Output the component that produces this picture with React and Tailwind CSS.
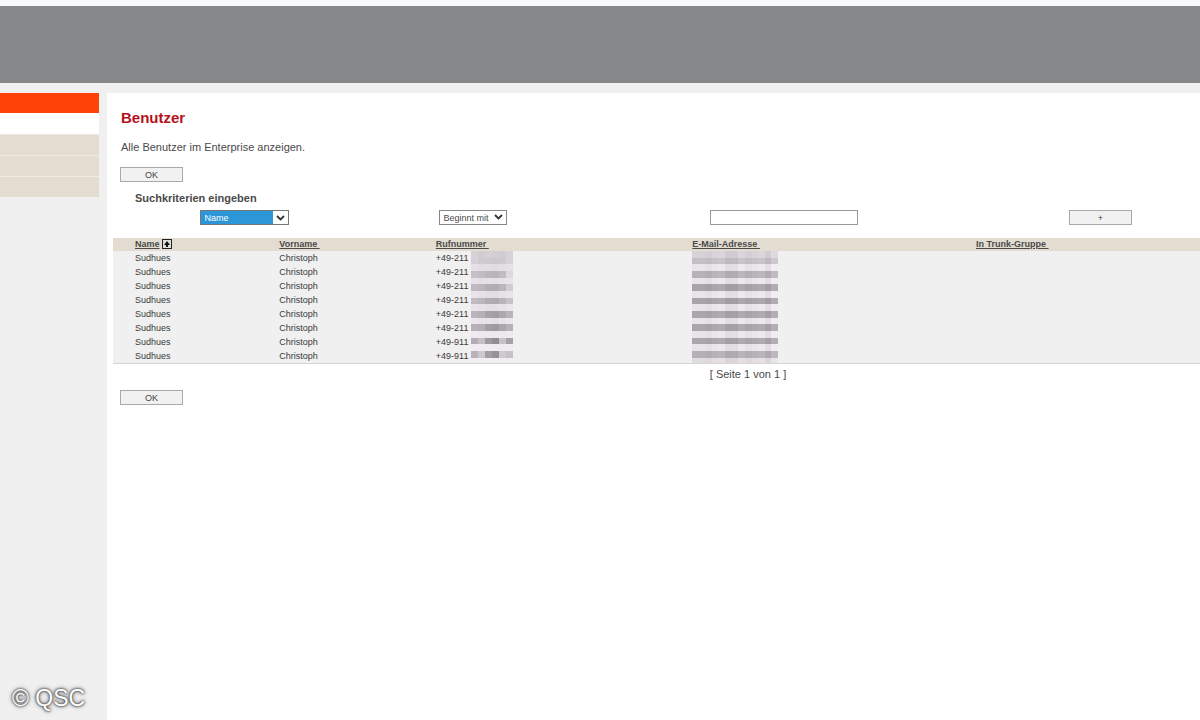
import { useState } from "react";

const users = [
  { name: "Sudhues", firstName: "Christoph", phone: "+49-211" },
  { name: "Sudhues", firstName: "Christoph", phone: "+49-211" },
  { name: "Sudhues", firstName: "Christoph", phone: "+49-211" },
  { name: "Sudhues", firstName: "Christoph", phone: "+49-211" },
  { name: "Sudhues", firstName: "Christoph", phone: "+49-211" },
  { name: "Sudhues", firstName: "Christoph", phone: "+49-211" },
  { name: "Sudhues", firstName: "Christoph", phone: "+49-911" },
  { name: "Sudhues", firstName: "Christoph", phone: "+49-911" },
];

const menuItems = ["a", "b", "c"];

// Grey levels of the mosaic tiles, one line per half row of the table
const PHONE_TILES = [
  [214, 208, 212, 210, 208, 214],
  [212, 206, 205, 204, 206, 214],
  [228, 224, 226, 224, 226, 228],
  [196, 192, 186, 184, 192, 220],
  [230, 228, 228, 228, 230, 232],
  [190, 186, 178, 176, 186, 208],
  [232, 228, 226, 226, 230, 232],
  [192, 186, 176, 174, 184, 198],
  [232, 230, 228, 228, 230, 234],
  [186, 180, 166, 162, 172, 184],
  [234, 230, 230, 228, 232, 234],
  [182, 178, 162, 158, 170, 182],
  [238, 236, 236, 236, 236, 238],
  [178, 196, 158, 144, 198, 164],
  [239, 239, 239, 239, 239, 239],
  [182, 204, 162, 150, 206, 198],
];

const MAIL_COLUMNS = [-2, -2, -6, 0, 2, -9, -8, 2, -5, 0, 2, -8, 6];
const MAIL_BARS = [198, 184, 170, 170, 172, 172, 172, 182];
const MAIL_TILES = Array.from({ length: 17 }, (_, i) => {
  const base = i === 0 ? 216 : i === 16 ? 226 : i % 2 ? MAIL_BARS[(i - 1) / 2] : 234;
  return MAIL_COLUMNS.map((d) => base + d);
});

// Every table row shows its own 14px slice of the mosaic
function Mosaic({ tiles, row, width, className }) {
  const cell = width / tiles[0].length;
  return (
    <svg
      className={className}
      width={width}
      height="14"
      viewBox={`0 ${row * 14} ${width} 14`}
      shapeRendering="crispEdges"
      aria-hidden="true"
    >
      {tiles.map((line, y) =>
        line.map((v, x) => (
          <rect
            key={`${x}-${y}`}
            x={x * cell}
            y={y * 6.67}
            width={cell + 0.5}
            height="7"
            fill={`rgb(${v}, ${v - 4}, ${v + 1})`}
          />
        ))
      )}
    </svg>
  );
}

function Chevron({ className }) {
  return (
    <svg className={className} width="9" height="6" viewBox="0 0 9 6" aria-hidden="true">
      <path d="M1 1 L4.5 4.5 L8 1" fill="none" stroke="#333" strokeWidth="1.8" />
    </svg>
  );
}

function SmallButton({ children, ...props }) {
  return (
    <button
      type="button"
      className="block h-[15px] w-[63px] border border-[#a9a9a9] bg-[#f1f1f1] text-center text-[9px] leading-3 text-[#444]"
      {...props}
    >
      {children}
    </button>
  );
}

function ColumnHead({ label, className, children }) {
  return (
    <th scope="col" className={`p-0 text-left font-bold ${className}`}>
      <a href="#" className="whitespace-pre underline">
        {label}
      </a>
      {children}
    </th>
  );
}

export default function App() {
  const [field, setField] = useState("Name");
  const [mode, setMode] = useState("Beginnt mit");
  const [query, setQuery] = useState("");

  return (
    <div className="flex min-h-screen flex-col bg-[#f0f0f0] font-['Liberation_Sans',Arial,sans-serif] text-[#4a4a4a]">
      <header className="h-[83px] border-t-6 border-[#f5f9f9] bg-[#868889]" />

      <div className="flex flex-1 pt-2.5">
        <aside className="flex w-[107px] shrink-0 flex-col justify-between">
          <nav className="w-[99px]">
            <div className="h-5 bg-[#ff4308]" />
            <div className="h-[21px] bg-white" />
            {menuItems.map((item) => (
              <div key={item} className="h-[21px] border-t border-[#eeebe3] bg-[#e3ddd1]" />
            ))}
          </nav>
          <p className="pb-2 pl-3 text-[23px] leading-7 text-white [text-shadow:0_0_2px_#333,0_0_3px_#555,0_0_5px_#777]">
            © QSC
          </p>
        </aside>

        <main className="min-w-0 flex-1 bg-white pt-4">
          <div className="px-3.5">
            <h1 className="text-[15px] leading-[18px] font-bold text-[#b5121b]">Benutzer</h1>
            <p className="mt-3 text-[11px] leading-4">Alle Benutzer im Enterprise anzeigen.</p>
          </div>
          <div className="mt-3 px-[13px]">
            <SmallButton>OK</SmallButton>
          </div>

          <form onSubmit={(e) => e.preventDefault()}>
            <h2 className="mt-2 pl-7 text-[11px] leading-4 font-bold">Suchkriterien eingeben</h2>
            <div className="mt-1 grid h-4 grid-cols-[270fr_187fr_435fr_199fr] items-start justify-items-center pl-0.5">
              <div className="relative">
                <select
                  aria-label="Suchfeld"
                  value={field}
                  onChange={(e) => setField(e.target.value)}
                  className="block h-[15px] w-[89px] appearance-none border border-[#777] bg-[#2c97d8] pl-1 text-[9px] leading-3 text-white"
                >
                  <option>Name</option>
                  <option>Vorname</option>
                  <option>Rufnummer</option>
                </select>
                <span className="pointer-events-none absolute inset-y-px right-px flex w-[15px] items-center justify-center bg-white">
                  <Chevron />
                </span>
              </div>
              <div className="relative">
                <select
                  aria-label="Vergleich"
                  value={mode}
                  onChange={(e) => setMode(e.target.value)}
                  className="block h-[15px] w-[68px] appearance-none border border-[#888] bg-white pl-1 text-[9px] leading-3"
                >
                  <option>Beginnt mit</option>
                  <option>Enthält</option>
                </select>
                <Chevron className="pointer-events-none absolute top-1 right-1" />
              </div>
              <input
                type="text"
                aria-label="Suchbegriff"
                value={query}
                onChange={(e) => setQuery(e.target.value)}
                className="block h-[15px] w-[148px] border border-[#999] bg-white px-1 text-[9px]"
              />
              <SmallButton aria-label="Kriterium hinzufügen">+</SmallButton>
            </div>
          </form>

          <div className="mt-3 pl-1.5">
            <table className="w-full table-fixed border-collapse border-b border-[#d6d6d0] bg-[#f0f0f0] text-[9px] leading-[14px] text-[#3a3a3a]">
              <thead className="bg-[#e3ddd1] leading-[13px] text-[#4a4a4a]">
                <tr className="h-[13px]">
                  <ColumnHead label="Name" className="w-[15.3%] pl-[22px]!">
                    <svg
                      className="ml-0.5 inline-block align-[-2px]"
                      width="10"
                      height="10"
                      viewBox="0 0 10 10"
                      role="img"
                      aria-label="aufsteigend"
                    >
                      <rect x="0.5" y="0.5" width="9" height="9" fill="#ddd" stroke="#222" />
                      <path d="M5 2 L8 6 H6 V8 H4 V6 H2 Z" fill="#111" />
                    </svg>
                  </ColumnHead>
                  <ColumnHead label="Vorname " className="w-[14.4%]" />
                  <ColumnHead label="Rufnummer " className="w-[23.6%]" />
                  <ColumnHead label="E-Mail-Adresse " className="w-[26.1%]" />
                  <ColumnHead label="In Trunk-Gruppe " className="" />
                </tr>
              </thead>
              <tbody>
                {users.map((user, i) => (
                  <tr key={i} className="h-[14px]">
                    <td className="p-0 pl-[22px]">{user.name}</td>
                    <td className="p-0">{user.firstName}</td>
                    <td className="p-0">
                      <div className="flex">
                        <span className="w-[35px]">{user.phone}</span>
                        <Mosaic tiles={PHONE_TILES} row={i} width={42} />
                      </div>
                    </td>
                    <td className="p-0">
                      <Mosaic className="block" tiles={MAIL_TILES} row={i} width={86} />
                    </td>
                    <td className="p-0" />
                  </tr>
                ))}
              </tbody>
            </table>
          </div>

          <p className="mt-0.5 pl-[189px] text-center text-[11px] leading-4">[ Seite 1 von 1 ]</p>
          <div className="mt-2 px-[13px]">
            <SmallButton>OK</SmallButton>
          </div>
        </main>
      </div>
    </div>
  );
}
